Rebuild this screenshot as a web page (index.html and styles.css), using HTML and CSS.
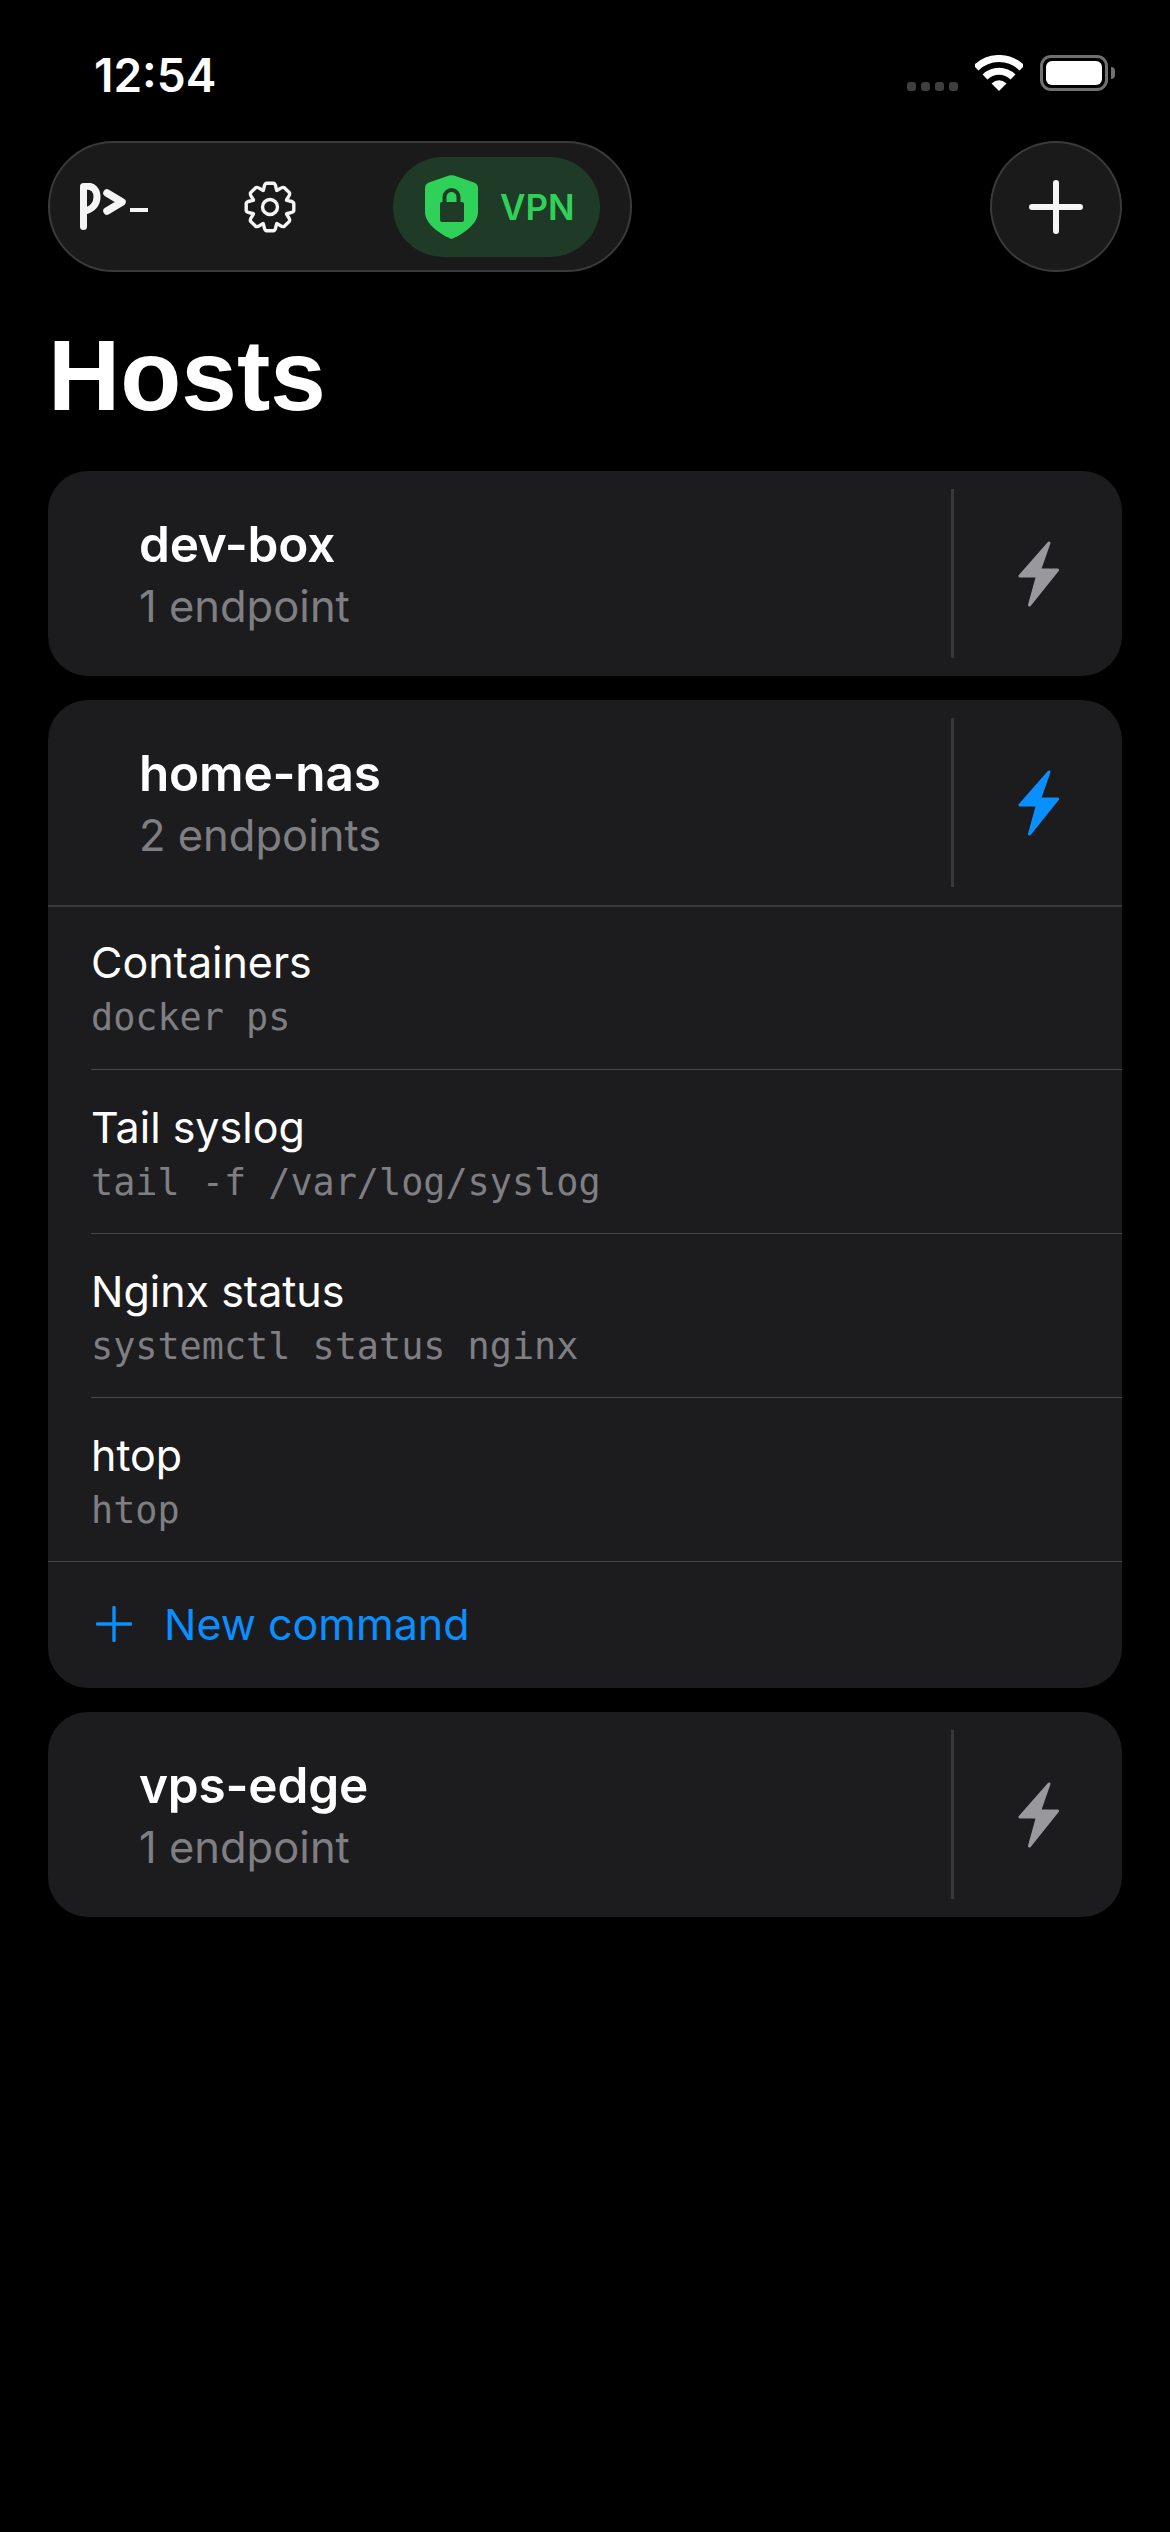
FILE: index.html
```html
<!DOCTYPE html>
<html lang="en">
<head>
  <meta charset="UTF-8">
  <meta name="viewport" content="width=device-width, initial-scale=1.0">
  <title>Hosts</title>
  <link rel="stylesheet" href="styles.css">
</head>
<body>
  <div class="statusBar">
    <span class="time">12:54</span>
    <div class="statusIcons">
      <div class="signal"><i></i><i></i><i></i><i></i></div>
      <svg class="wifi" viewBox="0 0 48 36">
        <path d="M1 13 A32.5 32.5 0 0 1 47 13" fill="none" stroke="#fff" stroke-width="7"/>
        <path d="M10 22 A20 20 0 0 1 38 22" fill="none" stroke="#fff" stroke-width="7"/>
        <path d="M24 36 L16.5 28.5 Q24 22 31.5 28.5 Z" fill="#fff"/>
      </svg>
      <div class="battery"><div class="batteryFill"></div></div>
      <div class="batteryNub"></div>
    </div>
  </div>

  <div class="toolbar">
    <div class="toolPill">
      <svg class="logo" viewBox="0 0 70 48">
        <path d="M3.5 3.5 V43.5" fill="none" stroke="#f5f5f5" stroke-width="7" stroke-linecap="round"/>
        <path d="M4 3 C14 2 17 8 17 14 C17 20 13 27 4 28" fill="none" stroke="#f5f5f5" stroke-width="7"/>
        <path d="M27 10 L42 19 L27 28" fill="none" stroke="#f5f5f5" stroke-width="7.5" stroke-linecap="round" stroke-linejoin="round"/>
        <rect x="50" y="25" width="18" height="4" fill="#f5f5f5"/>
      </svg>
      <svg class="gear" viewBox="-26 -26 52 52">
        <defs>
          <path id="tooth" d="M-6.9 -16.6 C-5.5 -18 -6.5 -23.4 -3.5 -23.8 H3.5 C6.5 -23.4 5.5 -18 6.9 -16.6" fill="none" stroke="#f5f5f5" stroke-width="3.4" stroke-linecap="round"/>
        </defs>
        <use href="#tooth"/>
        <use href="#tooth" transform="rotate(45)"/>
        <use href="#tooth" transform="rotate(90)"/>
        <use href="#tooth" transform="rotate(135)"/>
        <use href="#tooth" transform="rotate(180)"/>
        <use href="#tooth" transform="rotate(225)"/>
        <use href="#tooth" transform="rotate(270)"/>
        <use href="#tooth" transform="rotate(315)"/>
        <circle r="7.5" fill="none" stroke="#f5f5f5" stroke-width="3.4"/>
      </svg>
      <div class="vpnPill">
        <svg class="shield" viewBox="0 0 53 64">
          <path d="M24 .6 Q26.5 -.2 29 .6 L49 7.5 Q53 9 53 13 V37 C53 48 40 58 28 63.4 Q26.5 64 25 63.4 C13 58 0 48 0 37 V13 Q0 9 4 7.5 Z" fill="#30d158"/>
          <path d="M19.5 28 V22 A7 7 0 0 1 33.5 22 V28" fill="none" stroke="#1f3a27" stroke-width="4"/>
          <rect x="15" y="27" width="24" height="20" rx="2" fill="#1f3a27"/>
        </svg>
        <span class="vpnLabel">VPN</span>
      </div>
    </div>
    <button class="addBtn">
      <svg class="addIcon" viewBox="0 0 54 54">
        <path d="M27 3 V51 M3 27 H51" fill="none" stroke="#f5f5f5" stroke-width="6" stroke-linecap="round"/>
      </svg>
    </button>
  </div>

  <h1 class="pageTitle">Hosts</h1>

  <div class="hostList">
    <div class="hostCard">
      <div class="hostHead">
        <div class="hostInfo">
          <div class="hostName">dev-box</div>
          <div class="hostSub">1 endpoint</div>
        </div>
        <div class="boltBox">
          <svg class="bolt" viewBox="0 0 41 66"><path d="M31 2 L2 35 H19.5 L11.5 64 L39.5 29 H21.5 Z"/></svg>
        </div>
      </div>
    </div>

    <div class="hostCard">
      <div class="hostHead">
        <div class="hostInfo">
          <div class="hostName">home-nas</div>
          <div class="hostSub">2 endpoints</div>
        </div>
        <div class="boltBox">
          <svg class="bolt active" viewBox="0 0 41 66"><path d="M31 2 L2 35 H19.5 L11.5 64 L39.5 29 H21.5 Z"/></svg>
        </div>
      </div>
      <div class="commands">
        <div class="cmd">
          <div class="cmdInner">
            <div class="cmdName">Containers</div>
            <div class="cmdLine">docker ps</div>
          </div>
        </div>
        <div class="cmd">
          <div class="cmdInner">
            <div class="cmdName">Tail syslog</div>
            <div class="cmdLine">tail -f /var/log/syslog</div>
          </div>
        </div>
        <div class="cmd">
          <div class="cmdInner">
            <div class="cmdName">Nginx status</div>
            <div class="cmdLine">systemctl status nginx</div>
          </div>
        </div>
        <div class="cmd">
          <div class="cmdInner">
            <div class="cmdName">htop</div>
            <div class="cmdLine">htop</div>
          </div>
        </div>
      </div>
      <div class="newCmd">
        <svg class="newIcon" viewBox="0 0 36 36">
          <path d="M18 1.5 V34.5 M1.5 18 H34.5" fill="none" stroke="#0a8fff" stroke-width="3.4" stroke-linecap="round"/>
        </svg>
        <span>New command</span>
      </div>
    </div>

    <div class="hostCard">
      <div class="hostHead">
        <div class="hostInfo">
          <div class="hostName">vps-edge</div>
          <div class="hostSub">1 endpoint</div>
        </div>
        <div class="boltBox">
          <svg class="bolt" viewBox="0 0 41 66"><path d="M31 2 L2 35 H19.5 L11.5 64 L39.5 29 H21.5 Z"/></svg>
        </div>
      </div>
    </div>
  </div>
</body>
</html>
```

FILE: styles.css
```css
* {
  margin: 0;
  padding: 0;
  box-sizing: border-box;
}
body {
  background: #000;
  color: #fff;
  font-family: Inter, "Liberation Sans", sans-serif;
  min-height: 100vh;
}

/* status bar */
.statusBar {
  height: 141px;
  display: flex;
  justify-content: space-between;
  padding: 51px 55px 0 94px;
}
.time {
  font-size: 46px;
  font-weight: 600;
  line-height: 48px;
}
.statusIcons {
  display: flex;
  align-items: flex-start;
  padding-top: 4px;
}
.signal {
  display: flex;
  gap: 5px;
  margin-top: 27px;
  margin-right: 17px;
}
.signal i {
  display: block;
  width: 9px;
  height: 9px;
  border-radius: 3px;
  background: #3f3f3f;
}
.wifi {
  width: 48px;
  height: 36px;
  margin-right: 17px;
}
.battery {
  width: 68px;
  height: 36px;
  border: 3px solid #707070;
  border-radius: 11px;
  padding: 3px;
}
.batteryFill {
  height: 100%;
  background: #fff;
  border-radius: 6px;
}
.batteryNub {
  width: 4px;
  height: 12px;
  margin: 12px 0 0 3px;
  background: #707070;
  border-radius: 0 6px 6px 0;
}

/* toolbar */
.toolbar {
  display: flex;
  justify-content: space-between;
  padding: 0 48px;
}
.toolPill {
  width: 584px;
  height: 131px;
  background: #1a1a1a;
  border: 2px solid #3a3a3a;
  border-radius: 66px;
  display: flex;
  align-items: center;
  padding: 0 30px;
}
.logo {
  width: 70px;
  height: 48px;
}
.gear {
  width: 52px;
  height: 52px;
  margin-left: 94px;
}
.vpnPill {
  width: 207px;
  height: 100px;
  margin-left: auto;
  background: #1f3a27;
  border-radius: 50px;
  display: flex;
  align-items: center;
  padding-left: 32px;
}
.shield {
  width: 53px;
  height: 64px;
}
.vpnLabel {
  margin-left: 22px;
  font-size: 35px;
  font-weight: 600;
  color: #30d158;
}
.addBtn {
  width: 132px;
  height: 131px;
  border-radius: 50%;
  background: #1a1a1a;
  border: 2px solid #3a3a3a;
  display: flex;
  align-items: center;
  justify-content: center;
}
.addIcon {
  width: 54px;
  height: 54px;
}

.pageTitle {
  font-family: "Liberation Sans", Arial, sans-serif;
  font-size: 100px;
  font-weight: 700;
  line-height: 120px;
  padding: 43px 0 0 48px;
  height: 199px;
}

/* host cards */
.hostList {
  display: flex;
  flex-direction: column;
  gap: 24px;
  padding: 0 48px;
}
.hostCard {
  background: #1c1c1e;
  border-radius: 40px;
  overflow: hidden;
}
.hostHead {
  height: 205px;
  display: flex;
}
.hostInfo {
  flex: 1;
  padding: 2px 0 0 91px;
  display: flex;
  flex-direction: column;
  justify-content: center;
}
.hostName {
  font-size: 49.5px;
  font-weight: 600;
  line-height: 60px;
  letter-spacing: -0.2px;
}
.hostSub {
  font-size: 43.5px;
  line-height: 60px;
  margin-top: 2px;
  color: #7f7f83;
}
.boltBox {
  width: 171px;
  margin: 18px 0;
  border-left: 3px solid #38383a;
  display: flex;
  align-items: center;
  justify-content: center;
}
.bolt {
  width: 41px;
  height: 66px;
  fill: #98989d;
  stroke: #98989d;
  stroke-width: 3;
  stroke-linejoin: round;
}
.bolt.active {
  fill: #0a8fff;
  stroke: #0a8fff;
}

.commands {
  box-shadow: inset 0 2px 0 #38383a;
}
.cmd {
  padding-left: 43px;
}
.cmdInner {
  height: 164px;
  padding-top: 1px;
  display: flex;
  flex-direction: column;
  justify-content: center;
}
.cmd + .cmd .cmdInner {
  border-top: 1px solid #48484a;
}
.cmdName {
  font-size: 43px;
  line-height: 58px;
}
.cmdLine {
  font-family: "DejaVu Sans Mono", "Liberation Mono", monospace;
  font-size: 36.8px;
  line-height: 48px;
  margin-top: 3px;
  color: #7f7f83;
}
.newCmd {
  height: 127px;
  padding-bottom: 2px;
  border-top: 1px solid #48484a;
  display: flex;
  align-items: center;
  padding-left: 48px;
  font-size: 43px;
  color: #0a8fff;
}
.newIcon {
  width: 36px;
  height: 36px;
  margin-right: 32px;
}
```
